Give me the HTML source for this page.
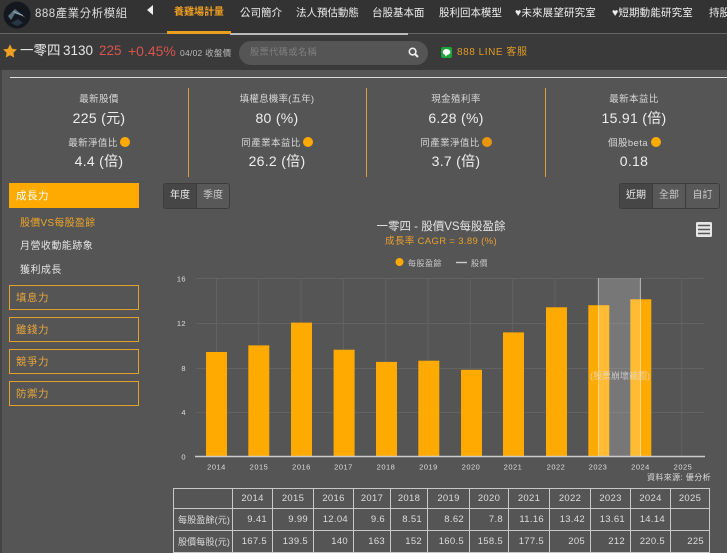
<!DOCTYPE html>
<html lang="zh-Hant"><head><meta charset="utf-8"><style>
html,body{margin:0;padding:0;background:#555}
#p{position:relative;width:727px;height:553px;overflow:hidden;background:#555;font-family:"Liberation Sans","Noto Sans CJK TC",sans-serif;color:#e4e4e4}
#p div,#p span.a{position:absolute;white-space:nowrap}
.n{top:5px;font-size:10.5px;line-height:16px;color:#eee;letter-spacing:-.02px}
.c{text-align:center;width:170px}
.l{font-size:9.5px;line-height:12px;color:#d8d8d8;letter-spacing:.4px}
.v{font-size:14px;line-height:16px;color:#eee;letter-spacing:.3px}
.i{width:10px;height:10px;border-radius:50%;background:#fa0}
.vl{width:1px;top:88px;height:89px;background:#d9a032}
.b{left:9px;width:128px;height:23px;border:1px solid #e3a32b;color:#e8a53a;font-size:10.5px;line-height:25px;text-indent:6px;letter-spacing:.5px}
.s{left:20px;font-size:10px;line-height:14px;letter-spacing:.25px;color:#e4e4e4}
.t{top:183px;height:24px;border:1px solid #3c3c3c;background:#585858;font-size:10px;line-height:24px;text-align:center;color:#ccc}
.t.on{background:#464646;color:#eee}
table{position:absolute;left:173px;top:488px;width:536px;height:63px;border-collapse:collapse;table-layout:fixed;font-size:9.5px;color:#ddd;letter-spacing:.3px}
td{border:1px solid #c8c8c8;padding:0 5px 0 0;text-align:right;height:21px;line-height:12px;white-space:nowrap;overflow:hidden}
tr:first-child td{text-align:center;padding:0;height:19px}
td:first-child{text-align:left;padding:0 0 0 4px;font-size:9px;letter-spacing:.15px}
</style></head><body><div id="p">
<div style="left:0;top:0;width:727px;height:33px;background:#333"></div>
<div style="left:0;top:33px;width:727px;height:37px;background:#3a3a3a"></div>
<div style="left:0;top:33px;width:727px;height:1px;background:#666"></div>
<div style="left:230px;top:33px;width:178px;height:2px;background:#bbb"></div>
<div style="left:167px;top:31px;width:64px;height:3px;background:#e8a020"></div>
<div style="left:0;top:70px;width:2px;height:483px;background:#444"></div>
<div style="left:10px;top:77px;width:717px;height:1px;background:#ddd"></div>

<svg style="position:absolute;left:3px;top:1px" width="28" height="28" viewBox="0 0 28 28"><circle cx="14" cy="14" r="13.5" fill="#14181e"/><path d="M5 15 L12 8 L23 17 L18 14.5 L12 12.5 L8 19Z" fill="#56707f"/><path d="M8 22 L15 18 L20 22 L14 25Z" fill="#263644"/><path d="M10 10.5 L20 14.5" stroke="#a6b8c4" stroke-width=".8"/></svg>
<div style="left:35px;top:6px;font-size:11.5px;line-height:16px;letter-spacing:.5px;color:#ddd">888產業分析模組</div>
<svg style="position:absolute;left:146px;top:5px" width="8" height="10"><path d="M7 0V10L1 5Z" fill="#eee"/></svg>
<div class="n" style="left:174px;color:#f0a020;font-weight:bold;font-size:10px">養雞場計量</div>
<div class="n" style="left:240px">公司簡介</div>
<div class="n" style="left:296px">法人預估動態</div>
<div class="n" style="left:372px">台股基本面</div>
<div class="n" style="left:439px">股利回本模型</div>
<div class="n" style="left:515px;letter-spacing:.15px">♥未來展望研究室</div>
<div class="n" style="left:612px;letter-spacing:.15px">♥短期動能研究室</div>
<div class="n" style="left:709px">持股</div>

<svg style="position:absolute;left:3px;top:44px" width="14" height="14" viewBox="0 0 24 24"><path d="M12 .5l3.6 7.6 8.2 1.1-6 5.8 1.5 8.3L12 19.3l-7.3 4 1.5-8.3-6-5.8 8.2-1.1z" fill="#f0a020"/></svg>
<div style="left:20px;top:42px;font-size:13.5px;line-height:18px;color:#e6e6e6">一零四</div>
<div style="left:63px;top:42px;font-size:13.5px;line-height:18px;color:#e6e6e6">3130</div>
<div style="left:99px;top:42px;font-size:13.5px;line-height:18px;color:#d9534f">225</div>
<div style="left:128px;top:42px;font-size:14px;line-height:18px;color:#d9534f">+0.45%</div>
<div style="left:180px;top:47px;font-size:8.5px;line-height:12px;color:#bbb;letter-spacing:.25px">04/02 收盤價</div>
<div style="left:239px;top:41px;width:189px;height:24px;border-radius:12px;background:#555"></div>
<div style="left:250px;top:46px;font-size:9px;line-height:13px;color:#808080;letter-spacing:.6px">股票代碼或名稱</div>
<svg style="position:absolute;left:408px;top:47px" width="11" height="11" viewBox="0 0 11 11"><circle cx="4.6" cy="4.6" r="3.3" fill="none" stroke="#eee" stroke-width="1.6"/><path d="M7 7l3 3" stroke="#eee" stroke-width="2"/></svg>
<svg style="position:absolute;left:441px;top:47px" width="11" height="11" viewBox="0 0 11 11"><rect width="11" height="11" rx="2" fill="#1aa63a"/><ellipse cx="5.5" cy="5" rx="3.8" ry="3" fill="#fff"/><path d="M4 7.5L4.5 9.6 6.6 7.6Z" fill="#fff"/></svg>
<div style="left:457px;top:46px;font-size:10px;line-height:14px;color:#e09a28;letter-spacing:.55px">888 LINE 客服</div>

<div class="vl" style="left:188px"></div><div class="vl" style="left:366px"></div><div class="vl" style="left:545px"></div>

<div class="c l" style="left:14px;top:94px">最新股價</div><div class="c v" style="left:14px;top:110px">225 (元)</div>
<div class="c l" style="left:8px;top:138px">最新淨值比</div><div class="i" style="left:120px;top:137px"></div><div class="c v" style="left:14px;top:153px">4.4 (倍)</div>
<div class="c l" style="left:192px;top:94px;letter-spacing:.2px">填權息機率(五年)</div><div class="c v" style="left:192px;top:110px">80 (%)</div>
<div class="c l" style="left:186px;top:138px">同產業本益比</div><div class="i" style="left:303px;top:137px"></div><div class="c v" style="left:192px;top:153px">26.2 (倍)</div>
<div class="c l" style="left:371px;top:94px">現金殖利率</div><div class="c v" style="left:371px;top:110px">6.28 (%)</div>
<div class="c l" style="left:365px;top:138px">同產業淨值比</div><div class="i" style="left:482px;top:137px;background:#e8960c"></div><div class="c v" style="left:371px;top:153px">3.7 (倍)</div>
<div class="c l" style="left:549px;top:94px">最新本益比</div><div class="c v" style="left:549px;top:110px">15.91 (倍)</div>
<div class="c l" style="left:543px;top:138px">個股beta</div><div class="i" style="left:651px;top:137px"></div><div class="c v" style="left:549px;top:153px">0.18</div>

<div style="left:9px;top:183px;width:130px;height:25px;background:#fa0;color:#fff;font-size:10.5px;line-height:26px;text-indent:7px;letter-spacing:.5px">成長力</div>
<div class="s" style="top:217px;color:#eda52a">股價VS每股盈餘</div>
<div class="s" style="top:240px;letter-spacing:.45px">月營收動能跡象</div>
<div class="s" style="top:264px;letter-spacing:.45px">獲利成長</div>
<div class="b" style="top:285px">填息力</div>
<div class="b" style="top:317px">雖錢力</div>
<div class="b" style="top:349px">競爭力</div>
<div class="b" style="top:381px">防禦力</div>

<div class="t on" style="left:163px;width:32px;border-radius:3px 0 0 3px">年度</div>
<div class="t" style="left:196px;width:32px;border-radius:0 3px 3px 0">季度</div>
<div class="t on" style="left:619px;width:32px;border-radius:3px 0 0 3px">近期</div>
<div class="t" style="left:652px;width:32px">全部</div>
<div class="t" style="left:685px;width:33px;border-radius:0 3px 3px 0">自訂</div>

<svg style="position:absolute;left:0;top:0" width="727" height="553" font-family="'Liberation Sans','Noto Sans CJK TC',sans-serif">
<g stroke="#626262" stroke-width="1">
<path d="M196 278.5H704M196 323.5H704M196 368.5H704M196 412.5H704"/>
<path d="M216.5 278V456M258.8 278V456M301.1 278V456M343.4 278V456M385.7 278V456M428 278V456M470.3 278V456M512.6 278V456M554.9 278V456M597.2 278V456M639.5 278V456M681.8 278V456"/>
</g>
<g fill="#fa0">
<rect x="206" y="352" width="21" height="104.5"/>
<rect x="248.3" y="345.4" width="21" height="111.1"/>
<rect x="291" y="322.6" width="21" height="133.9"/>
<rect x="333.6" y="349.7" width="21" height="106.8"/>
<rect x="376" y="361.9" width="21" height="94.6"/>
<rect x="418.3" y="360.7" width="21" height="95.8"/>
<rect x="461" y="369.8" width="21" height="86.7"/>
<rect x="503" y="332.4" width="21" height="124.1"/>
<rect x="546" y="307.3" width="21" height="149.2"/>
<rect x="588.3" y="305.2" width="21" height="151.3"/>
<rect x="630.3" y="299.3" width="21" height="157.2"/>
</g>
<rect x="598" y="278" width="43" height="178" fill="#fff" fill-opacity=".2"/>
<path d="M598.5 278V456M640.5 278V456" stroke="#fff" stroke-opacity=".4"/>
<text x="620" y="379" text-anchor="middle" font-size="9" fill="#ddd" fill-opacity=".75">(股票崩壞範圍)</text>
<path d="M195 456.5H705" stroke="#ccc" stroke-width="1.6"/>
<g font-size="7.5" fill="#ddd" text-anchor="end" letter-spacing=".4">
<text x="186" y="281.5">16</text><text x="186" y="326">12</text><text x="186" y="371">8</text><text x="186" y="415">4</text><text x="186" y="459.5">0</text>
</g>
<g font-size="7.5" fill="#ddd" text-anchor="middle" letter-spacing=".5">
<text x="216.5" y="469.5">2014</text><text x="259" y="469.5">2015</text><text x="301.5" y="469.5">2016</text><text x="343.5" y="469.5">2017</text><text x="386" y="469.5">2018</text><text x="428.5" y="469.5">2019</text><text x="471" y="469.5">2020</text><text x="513" y="469.5">2021</text><text x="556" y="469.5">2022</text><text x="598" y="469.5">2023</text><text x="640.5" y="469.5">2024</text><text x="683" y="469.5">2025</text>
</g>
<text x="711" y="480" text-anchor="end" font-size="8" fill="#ddd" letter-spacing=".4">資料來源: 優分析</text>
<text x="441" y="230" text-anchor="middle" font-size="11.5" fill="#e4e4e4">一零四 - 股價VS每股盈餘</text>
<text x="441" y="244" text-anchor="middle" font-size="9.5" fill="#e8a030" letter-spacing=".35">成長率 CAGR = 3.89 (%)</text>
<circle cx="399.5" cy="262" r="4" fill="#fa0"/>
<text x="408" y="266" font-size="8" fill="#ccc" letter-spacing=".5">每股盈餘</text>
<path d="M456 262.5H467" stroke="#ccc" stroke-width="1.4"/>
<text x="471" y="266" font-size="8" fill="#ccc" letter-spacing=".5">股價</text>
<rect x="696" y="222" width="16" height="15" rx="1.5" fill="#e6e6e6"/>
<path d="M698 225.5H710M698 229.5H710M698 233.5H710" stroke="#555" stroke-width="1.6"/>
</svg>

<table><colgroup><col style="width:59px"><col style="width:40px"><col style="width:41px"><col style="width:40px"><col style="width:37px"><col style="width:37px"><col style="width:42px"><col style="width:39px"><col style="width:41px"><col style="width:41px"><col style="width:40px"><col style="width:40px"><col style="width:39px"></colgroup>
<tr><td></td><td>2014</td><td>2015</td><td>2016</td><td>2017</td><td>2018</td><td>2019</td><td>2020</td><td>2021</td><td>2022</td><td>2023</td><td>2024</td><td>2025</td></tr>
<tr><td>每股盈餘(元)</td><td>9.41</td><td>9.99</td><td>12.04</td><td>9.6</td><td>8.51</td><td>8.62</td><td>7.8</td><td>11.16</td><td>13.42</td><td>13.61</td><td>14.14</td><td></td></tr>
<tr><td>股價每股(元)</td><td>167.5</td><td>139.5</td><td>140</td><td>163</td><td>152</td><td>160.5</td><td>158.5</td><td>177.5</td><td>205</td><td>212</td><td>220.5</td><td>225</td></tr>
</table>
</div></body></html>
